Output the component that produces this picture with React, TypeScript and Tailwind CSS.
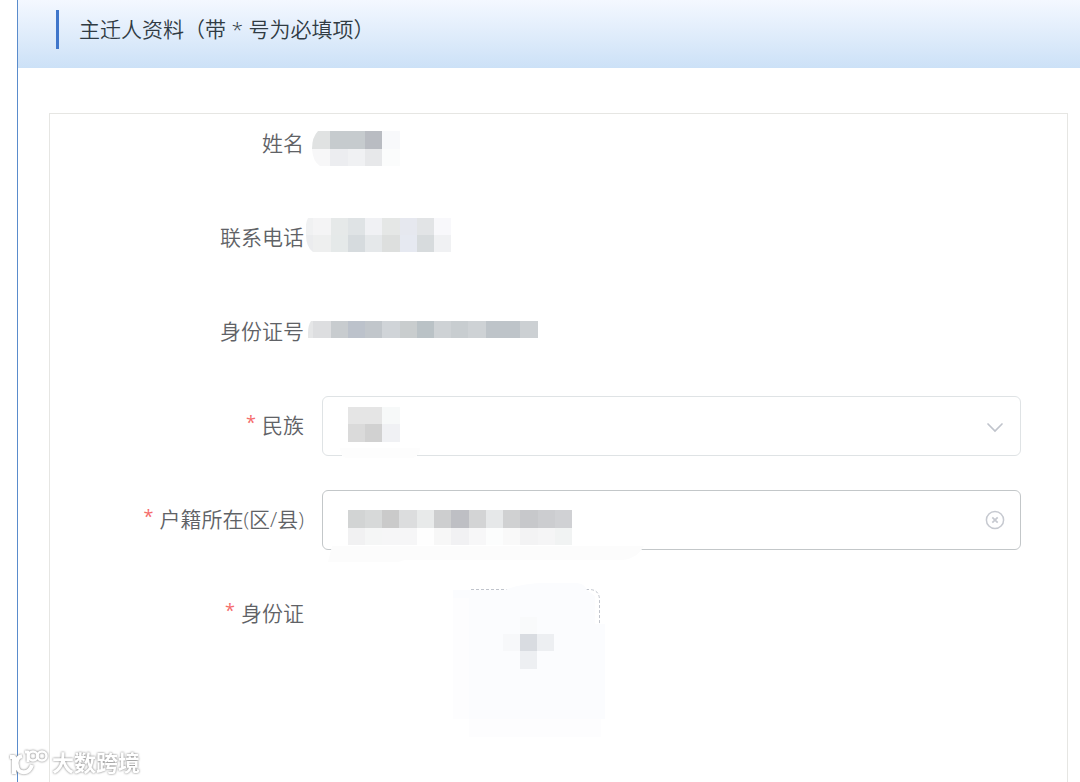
import { useState } from "react";
import type { ReactNode } from "react";

type Cell = [x: number, y: number, w: number, h: number, fill: string];

const nameCells: Cell[] = [
  [8, 8, 18, 18, "#e0e2e2"], [26, 8, 35, 18, "#c6cbce"], [61, 8, 17, 18, "#b9bcc2"], [78, 8, 18, 18, "#f8f9fb"],
  [8, 26, 18, 17, "#f7f7f8"], [26, 26, 18, 17, "#ecedf0"], [44, 26, 17, 17, "#f0f1f3"], [61, 26, 17, 17, "#e7e8ea"], [78, 26, 18, 17, "#fbfcfc"],
];

const phoneCells: Cell[] = [
  [2, 0, 7, 17, "#f0f1f2"], [9, 0, 18, 17, "#f4f4f5"], [27, 0, 17, 17, "#e6e9e9"], [44, 0, 17, 17, "#dfe3e5"], [61, 0, 17, 17, "#f0f1f4"], [78, 0, 18, 17, "#e5e7e6"], [96, 0, 17, 17, "#e6e8ef"], [113, 0, 17, 17, "#e2e4e6"], [130, 0, 17, 17, "#f8f8fb"],
  [2, 17, 7, 17, "#ebecee"], [9, 17, 18, 17, "#eeefef"], [27, 17, 17, 17, "#e5e9e9"], [44, 17, 17, 17, "#d6dbde"], [61, 17, 17, 17, "#e5e8ea"], [78, 17, 18, 17, "#dddfde"], [96, 17, 17, 17, "#e6e9f1"], [113, 17, 17, 17, "#d7dbdd"], [130, 17, 17, 17, "#f0f1f3"],
];

const idCells: Cell[] = [
  [4, 0, 5, 17, "#e5e6e7"], [9, 0, 18, 17, "#dddee0"], [27, 0, 17, 17, "#c8cccf"], [44, 0, 17, 17, "#bcc2cb"], [61, 0, 17, 17, "#c1c6cb"], [78, 0, 18, 17, "#d0d4d8"], [96, 0, 17, 17, "#c9cdce"], [113, 0, 17, 17, "#bac2c6"], [130, 0, 17, 17, "#ced2d5"], [147, 0, 17, 17, "#c8cdd0"], [164, 0, 18, 17, "#ced2d5"], [182, 0, 34, 17, "#bec4c9"], [216, 0, 18, 17, "#ccd0d3"],
];

const ethnicCells: Cell[] = [
  [26, 11, 34, 17, "#e5e5e5"], [60, 11, 18, 17, "#f7f9f9"],
  [26, 28, 17, 18, "#dadada"], [43, 28, 17, 18, "#d1d1d1"], [60, 28, 18, 18, "#f0f1f4"],
];

const districtCells: Cell[] = [
  [26, 20, 17, 18, "#d2d4d4"], [43, 20, 17, 18, "#d7d9d9"], [60, 20, 17, 18, "#cacaca"], [77, 20, 18, 18, "#dcddde"], [95, 20, 17, 18, "#e8eaea"], [112, 20, 17, 18, "#cdcecf"], [129, 20, 18, 18, "#bebfc4"], [147, 20, 17, 18, "#d3d4d5"], [164, 20, 17, 18, "#e6e8e9"], [181, 20, 17, 18, "#d0d1d2"], [198, 20, 18, 18, "#c7c8cb"], [216, 20, 17, 18, "#cccdd0"], [233, 20, 17, 18, "#d0d1d4"],
  [26, 38, 17, 17, "#f1f1f2"], [43, 38, 17, 17, "#f5f6f6"], [60, 38, 35, 17, "#f6f6f7"], [95, 38, 17, 17, "#fefefe"], [112, 38, 17, 17, "#f7f7f7"], [129, 38, 18, 17, "#f1f1f3"], [147, 38, 17, 17, "#f7f7f8"], [164, 38, 17, 17, "#fcfdfd"], [181, 38, 17, 17, "#f9f9f9"], [198, 38, 18, 17, "#f3f3f4"], [216, 38, 17, 17, "#f5f5f6"], [233, 38, 17, 17, "#f1f3f3"],
];

function Cells({ cells }: { cells: Cell[] }) {
  return (
    <>
      {cells.map(([x, y, w, h, fill]) => (
        <rect key={`${x}-${y}`} x={x} y={y} width={w} height={h} fill={fill} />
      ))}
    </>
  );
}

function Masked({ id, cells, clip, width, height }: { id: string; cells: Cell[]; clip: string; width: number; height: number }) {
  return (
    <svg aria-hidden="true" width={width} height={height} shapeRendering="crispEdges">
      <clipPath id={id}>
        <path d={clip} />
      </clipPath>
      <g clipPath={`url(#${id})`}>
        <Cells cells={cells} />
      </g>
    </svg>
  );
}

function Row({ label, htmlFor, required, children }: { label: string; htmlFor?: string; required?: boolean; children: ReactNode }) {
  const text = (
    <>
      {required && <span className="mr-1.5 align-[4px] text-lg leading-none font-normal text-[#f56c6c]">*</span>}
      {label}
    </>
  );
  return (
    <div className="flex min-h-[60px]">
      <div className="flex h-[60px] w-[254px] shrink-0 items-center justify-end pb-0.5 whitespace-nowrap">
        {htmlFor ? <label htmlFor={htmlFor}>{text}</label> : <span>{text}</span>}
      </div>
      <div className="flex min-w-0 grow items-center">{children}</div>
    </div>
  );
}

function Watermark() {
  return (
    <div className="pointer-events-none fixed bottom-1 left-2 flex items-center gap-1 drop-shadow-[0_0_1px_#777]">
      <svg aria-hidden="true" width="40" height="30" viewBox="0 0 40 30" fill="none" stroke="white" strokeWidth="4" strokeLinejoin="round">
        <path d="M2 9H6V26" />
        <path d="M14 8C9 9 8 13 9 18C10 26 21 27 24 17" />
        <path d="M17 4H20V14" strokeWidth="3" />
        <circle cx="25" cy="8" r="4.5" strokeWidth="2.6" />
        <circle cx="34" cy="8" r="4.5" strokeWidth="2.6" />
      </svg>
      <span className="pb-0.5 text-[22px] leading-7 font-bold text-white">大数跨境</span>
    </div>
  );
}

export default function App() {
  const [district, setDistrict] = useState("");
  return (
    <div className="min-h-screen overflow-hidden bg-white pl-[17px] font-['Open_Sans','Noto_Sans_CJK_SC',sans-serif] text-[21px] leading-8 font-[350] text-[#606266]">
      <main className="min-h-screen border-l border-[#5a8ccc]">
        <header className="flex h-[68px] items-start bg-linear-to-b from-[#f4f8ff] to-[#cce1f7] pt-2.5 pl-[38px]">
          <h1 className="flex h-[39px] items-center border-l-3 border-[#3f76cb] pb-0.5 pl-5 text-[#303b43]">主迁人资料（带 * 号为必填项）</h1>
        </header>
        <form className="mt-[45px] mr-3 ml-[31px] flex min-h-[669px] flex-col gap-[34px] border border-b-0 border-[#e6e6e3] pr-[46px]" onSubmit={(e) => e.preventDefault()}>
          <Row label="姓名">
            <Masked id="name-mask" cells={nameCells} width={96} height={43} clip="M14 8H96V43H16Q9 39 8 26Q8 14 14 8Z" />
          </Row>
          <Row label="联系电话">
            <Masked id="phone-mask" cells={phoneCells} width={147} height={40} clip="M4 0H147V34H9Q2 29 2 17Q1 5 4 0Z" />
          </Row>
          <Row label="身份证号">
            <Masked id="id-mask" cells={idCells} width={234} height={22} clip="M7 0H234V17H4V12Q4 4 7 0Z" />
          </Row>
          <Row label="民族" htmlFor="ethnic" required>
            <div className="relative ml-[18px] grow">
              <select id="ethnic" className="block h-[60px] w-full appearance-none rounded-md border border-[#dfe3e5] bg-white px-6 outline-none">
                <option value="" />
              </select>
              <svg aria-hidden="true" className="pointer-events-none absolute top-0 left-0" width="100" height="64" shapeRendering="crispEdges">
                <path d="M18 52H98V54Q96 62 88 62H24Q19 61 18 52Z" fill="#fdfdfd" />
                <Cells cells={ethnicCells} />
              </svg>
              <svg aria-hidden="true" className="pointer-events-none absolute top-[26px] right-[17px]" width="18" height="12" fill="none" stroke="#c0c4cc" strokeWidth="1.7" strokeLinecap="round">
                <path d="M2 2L9 9L16 2" />
              </svg>
            </div>
          </Row>
          <Row label="户籍所在(区/县)" htmlFor="district" required>
            <div className="relative ml-[18px] grow">
              <input id="district" value={district} onChange={(e) => setDistrict(e.target.value)} className="block h-[60px] w-full rounded-md border border-[#c3c7c9] bg-white px-6 outline-none" />
              <svg aria-hidden="true" className="pointer-events-none absolute top-0 left-0" width="322" height="74">
                <path d="M10 56H322Q314 70 298 70H92Q84 69 76 72H6Z" fill="#fcfcfc" />
                <Cells cells={districtCells} />
              </svg>
              <button type="button" aria-label="清空" onClick={() => setDistrict("")} className="absolute top-5 right-4">
                <svg aria-hidden="true" className="block" width="20" height="20" fill="none" stroke="#c6c9d0" strokeWidth="1.5">
                  <circle cx="10" cy="10" r="8.6" />
                  <path d="M7.3 7.3L12.7 12.7M12.7 7.3L7.3 12.7" strokeWidth="1.7" />
                </svg>
              </button>
            </div>
          </Row>
          <Row label="身份证" htmlFor="id-card" required>
            <input id="id-card" type="file" className="sr-only" />
            <label htmlFor="id-card" aria-label="上传身份证" className="-mt-0.5 ml-[147px] block cursor-pointer">
              <svg aria-hidden="true" className="block" width="156" height="158">
                <path d="M20 7.5H138Q148.5 7.5 148.5 18V42" fill="none" stroke="#c0c4cc" strokeDasharray="3 2" />
                <path d="M2 8H54Q70 1 96 1H126Q134 2 136 8L144 14V42H154V137H150V155H18V137H2Z" fill="#fbfcfe" />
                <path d="M2 16H18V137H2ZM18 137H150V155H18Z" fill="#fdfdfe" />
                <path d="M69 35H86V52H69Z" fill="#f9fafb" />
                <path d="M52 52H69V69H52Z" fill="#f7f8fa" />
                <path d="M69 52H86V69H69Z" fill="#d9dce1" />
                <path d="M86 52H103V69H86ZM69 69H86V87H69Z" fill="#edeff2" />
              </svg>
            </label>
          </Row>
        </form>
      </main>
      <Watermark />
    </div>
  );
}
